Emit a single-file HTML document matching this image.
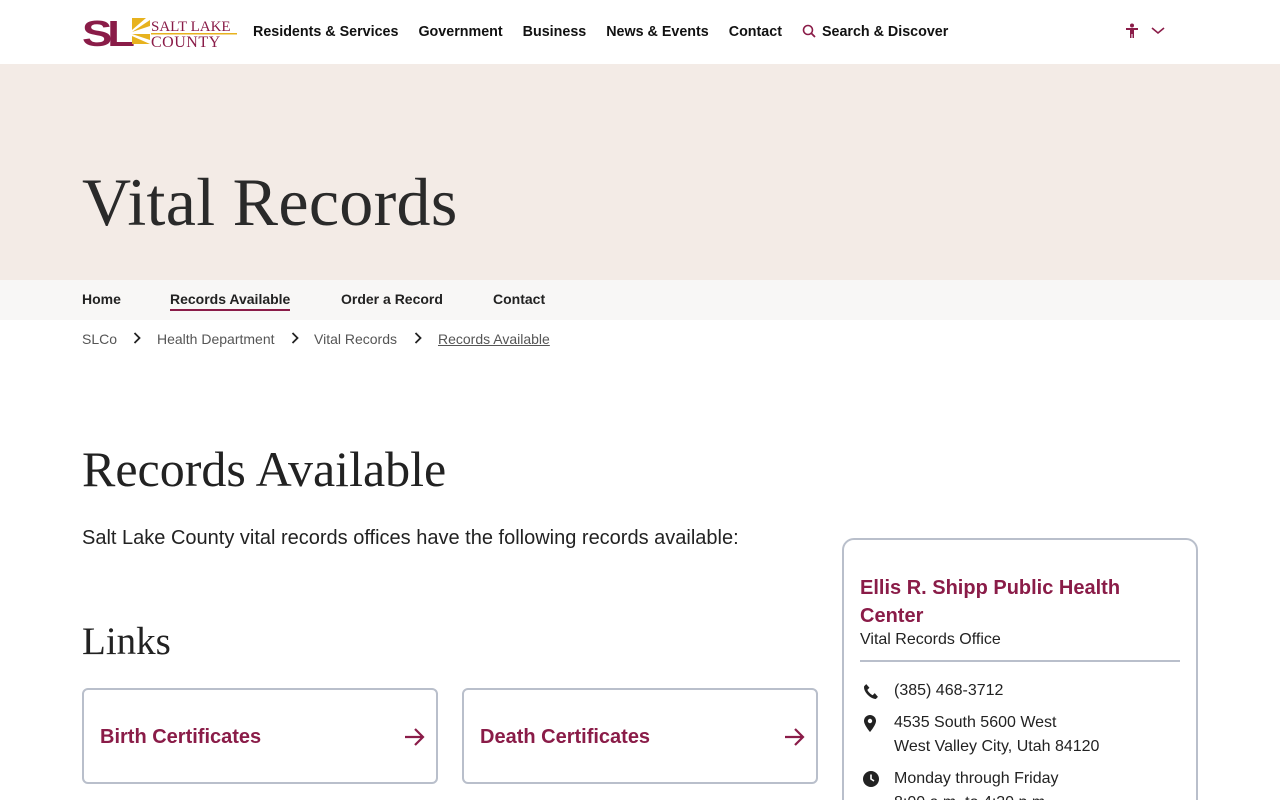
<!DOCTYPE html>
<html><head><meta charset="utf-8"><style>
*{box-sizing:border-box;margin:0;padding:0}
html,body{width:1280px;height:800px;overflow:hidden}
body{font-family:"Liberation Sans",Arial,sans-serif;color:#222;background:#fff;position:relative}
.hdr{height:64px;position:relative}
.nav{position:absolute;top:24px;left:253px;font-weight:bold;font-size:14.3px;color:#111;display:flex}
.nav span{margin-right:20px}
.hero{position:absolute;top:64px;left:0;width:1280px;height:216px;background:#f3ebe6}
.hero h1{position:absolute;left:82px;top:99px;font-family:"Liberation Serif",Georgia,serif;font-weight:normal;font-size:68px;color:#2a2a2a;letter-spacing:0.3px}
.sub{position:absolute;top:280px;left:0;width:1280px;height:40px;background:#f8f7f6;font-weight:bold;font-size:14px}
.sub span{position:absolute;top:11px}
.bc{position:absolute;top:331px;font-size:14px;color:#555}
.serif{font-family:"Liberation Serif",Georgia,serif;font-weight:normal;color:#222;position:absolute}
.card{position:absolute;top:688px;width:356px;height:96px;border:2px solid #b9bfcb;border-radius:6px}
.card b{position:absolute;left:16px;top:36px;font-size:20px;color:#8a1c48}
.card svg{position:absolute;right:10px;top:37px}
.side{position:absolute;left:842px;top:538px;width:356px;height:300px;border:2px solid #b9bfcb;border-radius:12px}
.it{position:absolute;left:50px;font-size:16px;color:#222;line-height:24px}
.ic{position:absolute;left:19px}
</style></head><body>
<div class="hdr">
<svg style="position:absolute;left:82px;top:16px" width="156" height="32" viewBox="0 0 156 32">
<text x="0" y="30" font-family="Liberation Sans" font-weight="bold" font-size="36" fill="#8a1c48" letter-spacing="-4" textLength="48" lengthAdjust="spacingAndGlyphs">SL</text>
<g fill="#e7b21e"><path d="M50 2h14l-14 12z"/><path d="M50 16l18-12v6z"/><path d="M50 18h18v6z"/><path d="M50 20l18 8h-18z"/></g>
<text x="69" y="15" font-family="Liberation Serif" font-size="15" fill="#8a1c48">SALT LAKE</text>
<rect x="69" y="17" width="86" height="1.5" fill="#e7b21e"/>
<text x="69" y="31" font-family="Liberation Serif" font-size="16" fill="#8a1c48" letter-spacing="0.5">COUNTY</text>
</svg>
<div class="nav"><span>Residents &amp; Services</span><span>Government</span><span>Business</span><span>News &amp; Events</span><span>Contact</span>
<span><svg width="14" height="14" viewBox="0 0 14 14" style="vertical-align:-2px;margin-right:6px"><circle cx="6" cy="6" r="4.5" fill="none" stroke="#8a1c48" stroke-width="1.6"/><path d="M9.3 9.3L13 13" stroke="#8a1c48" stroke-width="1.8"/></svg>Search &amp; Discover</span></div>
<svg style="position:absolute;left:1124px;top:23px" width="42" height="16" viewBox="0 0 42 16"><circle cx="8" cy="2.5" r="2" fill="#8a1c48"/><path d="M2 5h12v2h-4v8h-1.5v-4h-1v4H6V7H2z" fill="#8a1c48"/><path d="M28 5l6 5 6-5" fill="none" stroke="#8a1c48" stroke-width="1.6"/></svg>
</div>
<div class="hero"><h1>Vital Records</h1></div>
<div class="sub"><span style="left:82px">Home</span><span style="left:170px;border-bottom:2px solid #8a1c48;padding-bottom:2px">Records Available</span><span style="left:341px">Order a Record</span><span style="left:493px">Contact</span></div>
<span class="bc" style="left:82px">SLCo</span>
<span class="bc" style="left:157px">Health Department</span>
<span class="bc" style="left:314px">Vital Records</span>
<span class="bc" style="left:438px;text-decoration:underline">Records Available</span>
<svg style="position:absolute;left:133px;top:332px" width="8" height="12"><path d="M1.5 1l5 5-5 5" fill="none" stroke="#222" stroke-width="1.8"/></svg>
<svg style="position:absolute;left:291px;top:332px" width="8" height="12"><path d="M1.5 1l5 5-5 5" fill="none" stroke="#222" stroke-width="1.8"/></svg>
<svg style="position:absolute;left:414px;top:332px" width="8" height="12"><path d="M1.5 1l5 5-5 5" fill="none" stroke="#222" stroke-width="1.8"/></svg>
<div class="serif" style="left:82px;top:440px;font-size:50px">Records Available</div>
<div style="position:absolute;left:82px;top:527px;font-size:20px;color:#222">Salt Lake County vital records offices have the following records available:</div>
<div class="serif" style="left:82px;top:619px;font-size:39px">Links</div>
<div class="card" style="left:82px"><b>Birth Certificates</b><svg width="22" height="20" viewBox="0 0 22 20"><path d="M1 10h18M11 2l8 8-8 8" fill="none" stroke="#8a1c48" stroke-width="2.2"/></svg></div>
<div class="card" style="left:462px"><b>Death Certificates</b><svg width="22" height="20" viewBox="0 0 22 20"><path d="M1 10h18M11 2l8 8-8 8" fill="none" stroke="#8a1c48" stroke-width="2.2"/></svg></div>
<div class="side">
<div style="position:absolute;left:16px;top:34px;font-size:20px;font-weight:bold;color:#8a1c48;line-height:28px">Ellis R. Shipp Public Health<br>Center</div>
<div style="position:absolute;left:16px;top:91px;font-size:16px">Vital Records Office</div>
<div style="position:absolute;left:16px;top:120px;width:320px;height:2px;background:#b9bfcb"></div>
<svg class="ic" style="top:143px" width="15" height="17" viewBox="0 0 14 16"><path d="M3 1l3 3.5-2 2c1 2 3 4 5 5l2-2 3 3.5-2 2C7 15 0 8 1 3z" fill="#222"/></svg>
<div class="it" style="top:139px">(385) 468-3712</div>
<svg class="ic" style="top:175px" width="14" height="18" viewBox="0 0 14 18"><path d="M7 0a6 6 0 0 0-6 6c0 4 6 11 6 11s6-7 6-11a6 6 0 0 0-6-6z" fill="#222"/><circle cx="7" cy="6" r="2.2" fill="#fff"/></svg>
<div class="it" style="top:171px">4535 South 5600 West<br>West Valley City, Utah 84120</div>
<svg class="ic" style="top:231px" width="16" height="16" viewBox="0 0 16 16"><circle cx="8" cy="8" r="8" fill="#222"/><path d="M8 3.5V8l3 2" fill="none" stroke="#fff" stroke-width="1.6"/></svg>
<div class="it" style="top:227px">Monday through Friday<br>8:00 a.m. to 4:30 p.m.</div>
</div>
</body></html>
